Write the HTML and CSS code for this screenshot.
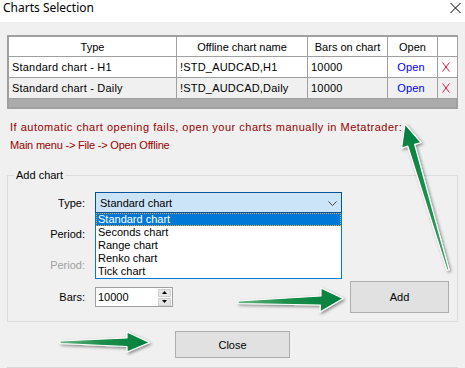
FILE: index.html
```html
<!DOCTYPE html>
<html>
<head>
    <meta charset="utf-8">
    <title>Charts Selection</title>
    <link rel="stylesheet" href="styles.css">
</head>
<body>
    <div class="titlebar">
        <span class="title">Charts Selection</span>
        <svg class="close-x" width="11" height="10" viewBox="0 0 11 10">
            <path d="M0.5 0 L10.5 10 M10.5 0 L0.5 10" stroke="#000" stroke-width="1" fill="none"/>
        </svg>
    </div>

    <div class="content">
        <div class="grid">
            <table>
                <colgroup>
                    <col style="width:168px">
                    <col style="width:131px">
                    <col style="width:80px">
                    <col style="width:50px">
                    <col style="width:19px">
                </colgroup>
                <thead>
                    <tr>
                        <th>Type</th>
                        <th>Offline chart name</th>
                        <th>Bars on chart</th>
                        <th>Open</th>
                        <th class="last"></th>
                    </tr>
                </thead>
                <tbody>
                    <tr>
                        <td>Standard chart - H1</td>
                        <td>!STD_AUDCAD,H1</td>
                        <td>10000</td>
                        <td class="open">Open</td>
                        <td class="last del">
                            <svg width="8" height="10" viewBox="0 0 8 10"><path d="M0.5 0.5 L7.5 9.5 M7.5 0.5 L0.5 9.5" stroke="#e3173e" stroke-width="1" fill="none"/></svg>
                        </td>
                    </tr>
                    <tr class="alt">
                        <td>Standard chart - Daily</td>
                        <td>!STD_AUDCAD,Daily</td>
                        <td>10000</td>
                        <td class="open">Open</td>
                        <td class="last del">
                            <svg width="8" height="10" viewBox="0 0 8 10"><path d="M0.5 0.5 L7.5 9.5 M7.5 0.5 L0.5 9.5" stroke="#e3173e" stroke-width="1" fill="none"/></svg>
                        </td>
                    </tr>
                </tbody>
            </table>
        </div>

        <div class="notice">
            <div class="notice-wide">If automatic chart opening fails, open your charts manually in Metatrader:</div>
            <div class="notice-narrow">Main menu -&gt; File -&gt; Open Offline</div>
        </div>

        <fieldset class="group">
            <legend>Add chart</legend>

            <div class="form-row type-row">
                <label>Type:</label>
                <div class="combo">
                    <span>Standard chart</span>
                    <svg class="chevron" width="9" height="5" viewBox="0 0 9 5">
                        <path d="M0.5 0.5 L4.5 4.5 L8.5 0.5" stroke="#444" stroke-width="1" fill="none"/>
                    </svg>
                    <ul class="dropdown">
                        <li class="selected">Standard chart</li>
                        <li>Seconds chart</li>
                        <li>Range chart</li>
                        <li>Renko chart</li>
                        <li>Tick chart</li>
                    </ul>
                </div>
            </div>

            <div class="form-row">
                <label>Period:</label>
            </div>

            <div class="form-row">
                <label class="disabled">Period:</label>
            </div>

            <div class="bars-row">
                <label>Bars:</label>
                <div class="spin">
                    <span class="spin-value">10000</span>
                    <div class="spin-buttons">
                        <div class="spin-btn"><svg width="5" height="3" viewBox="0 0 5 3"><path d="M2.5 0 L5 3 L0 3 Z" fill="#000"/></svg></div>
                        <div class="spin-btn"><svg width="5" height="3" viewBox="0 0 5 3"><path d="M0 0 L5 0 L2.5 3 Z" fill="#000"/></svg></div>
                    </div>
                </div>
                <button class="btn add-btn">Add</button>
            </div>
        </fieldset>

        <div class="footer">
            <button class="btn close-btn">Close</button>
        </div>
        <div class="bottom-line"></div>
    </div>

    <!-- annotation arrows drawn over the dialog -->
    <svg class="arrows" width="465" height="368" viewBox="0 0 465 368">
        <defs>
            <filter id="shadow" x="-20%" y="-20%" width="140%" height="140%">
                <feDropShadow dx="1.5" dy="1.5" stdDeviation="1.5" flood-color="#000" flood-opacity="0.45"/>
            </filter>
            <linearGradient id="greenH" x1="0" y1="0" x2="1" y2="0">
                <stop offset="0" stop-color="#6fb58a"/>
                <stop offset="0.45" stop-color="#1d8f4c"/>
                <stop offset="1" stop-color="#007f3c"/>
            </linearGradient>
            <linearGradient id="greenV" x1="0" y1="1" x2="0" y2="0">
                <stop offset="0" stop-color="#3aa063"/>
                <stop offset="1" stop-color="#007f3c"/>
            </linearGradient>
        </defs>
        <g filter="url(#shadow)" stroke="#fff" stroke-width="1.2" stroke-linejoin="round">
            <polygon fill="url(#greenV)" points="405,124 421,142.5 414.6,144.3 449,269.7 447,270.3 407.8,146.2 401.6,148"/>
            <polygon fill="url(#greenH)" points="238,301 321,296 321,288 343,298.5 320,312 320.5,305 238,303.5"/>
            <polygon fill="url(#greenH)" points="60,341 127,338 127,332 149.5,342.5 127,352 127,346.5 60,343.5"/>
        </g>
    </svg>
</body>
</html>
```

FILE: styles.css
```css
body {
    margin: 0;
    width: 465px;
    height: 368px;
    overflow: hidden;
    position: relative;
    background-color: #f0f0f0;
    font-family: "Liberation Sans", Arial, sans-serif;
    font-size: 11px;
    color: #000;
}
.titlebar {
    height: 22px;
    background: #fff;
    display: flex;
    justify-content: space-between;
    align-items: flex-start;
    padding: 0 4px 0 3px;
}
.title {
    font-family: "Noto Sans", "Liberation Sans", sans-serif;
    font-size: 12px;
    line-height: 16px;
}
.close-x {
    margin-top: 3px;
}
.content {
    padding: 13px 7px 0 7px;
}
.grid {
    width: 451px;
    height: 74px;
    box-sizing: border-box;
    border: 2px solid #a0a0a0;
    background: #ababab;
}
table {
    border-spacing: 0;
    table-layout: fixed;
    width: 448px;
}
th, td {
    border-right: 1px solid #a0a0a0;
    border-bottom: 1px solid #a0a0a0;
    padding: 0 3px;
    white-space: nowrap;
    overflow: hidden;
    background: #fff;
}
th {
    height: 19px;
    font-weight: normal;
    text-align: center;
}
td {
    height: 20px;
    letter-spacing: 0.2px;
}
tr.alt td {
    background: #f0f0f0;
}
th.last, td.last {
    border-right: none;
}
td.open {
    color: #0000ff;
    text-align: center;
    padding-right: 6px;
}
td.del {
    text-align: center;
    padding: 0 3px 0 0;
}
td.del svg {
    display: block;
    margin: 0 auto;
}
.notice {
    color: #9b0000;
    line-height: 18px;
    margin-top: 9px;
    padding-left: 3px;
    white-space: nowrap;
}
.notice-wide {
    letter-spacing: 0.5px;
}
.notice-narrow {
    letter-spacing: -0.2px;
}
.group {
    margin: 14px 0 0 0;
    padding: 0 8px 8px 0;
    border: 1px solid #dcdcdc;
    min-width: 0;
}
.group legend {
    margin-left: 6px;
    padding: 0 2px;
    line-height: 14px;
}
.form-row {
    display: flex;
    align-items: center;
    height: 21px;
    margin-top: 10px;
}
.form-row label, .bars-row label {
    width: 77px;
    margin-right: 10px;
    text-align: right;
}
label.disabled {
    color: #a0a0a0;
}
.type-row {
    position: relative;
    z-index: 2;
}
.combo {
    position: relative;
    width: 247px;
    height: 21px;
    box-sizing: border-box;
    border: 1px solid #005499;
    background: #cce4f7;
    display: flex;
    align-items: center;
    padding-left: 4px;
}
.chevron {
    position: absolute;
    right: 4px;
    top: 8px;
}
.dropdown {
    position: absolute;
    left: -1px;
    top: 20px;
    width: 247px;
    height: 66px;
    box-sizing: border-box;
    margin: 0;
    padding: 0;
    list-style: none;
    background: #fff;
    border: 1px solid #0078d7;
    border-top: none;
}
.dropdown li {
    height: 13px;
    line-height: 13px;
    padding-left: 2px;
}
.dropdown li.selected {
    background: #0078d7;
    color: #fff;
    outline: 1px dotted #f3a640;
    outline-offset: -1px;
}
.bars-row {
    display: flex;
    align-items: center;
    margin-top: 6px;
}
.spin {
    width: 78px;
    height: 20px;
    box-sizing: border-box;
    border: 1px solid #a0a0a0;
    background: #fff;
    display: flex;
    align-items: center;
    justify-content: space-between;
    padding-left: 2px;
}
.spin-buttons {
    display: flex;
    flex-direction: column;
    gap: 1px;
    margin-right: 1px;
}
.spin-btn {
    width: 13px;
    height: 8px;
    background: #e5e5e5;
    border: 1px solid #cfcfcf;
    box-sizing: border-box;
    display: flex;
    align-items: center;
    justify-content: center;
}
.btn {
    font-family: "Liberation Sans", Arial, sans-serif;
    font-size: 11px;
    color: #000;
    background: #e1e1e1;
    border: 1px solid #adadad;
    padding: 0;
}
.add-btn {
    margin-left: auto;
    width: 99px;
    height: 32px;
}
.footer {
    display: flex;
    justify-content: center;
    margin-top: 9px;
}
.close-btn {
    width: 115px;
    height: 27px;
}
.bottom-line {
    margin-top: 9px;
    border-top: 1px solid #d9d9d9;
}
.arrows {
    position: absolute;
    left: 0;
    top: 0;
    pointer-events: none;
}
```
